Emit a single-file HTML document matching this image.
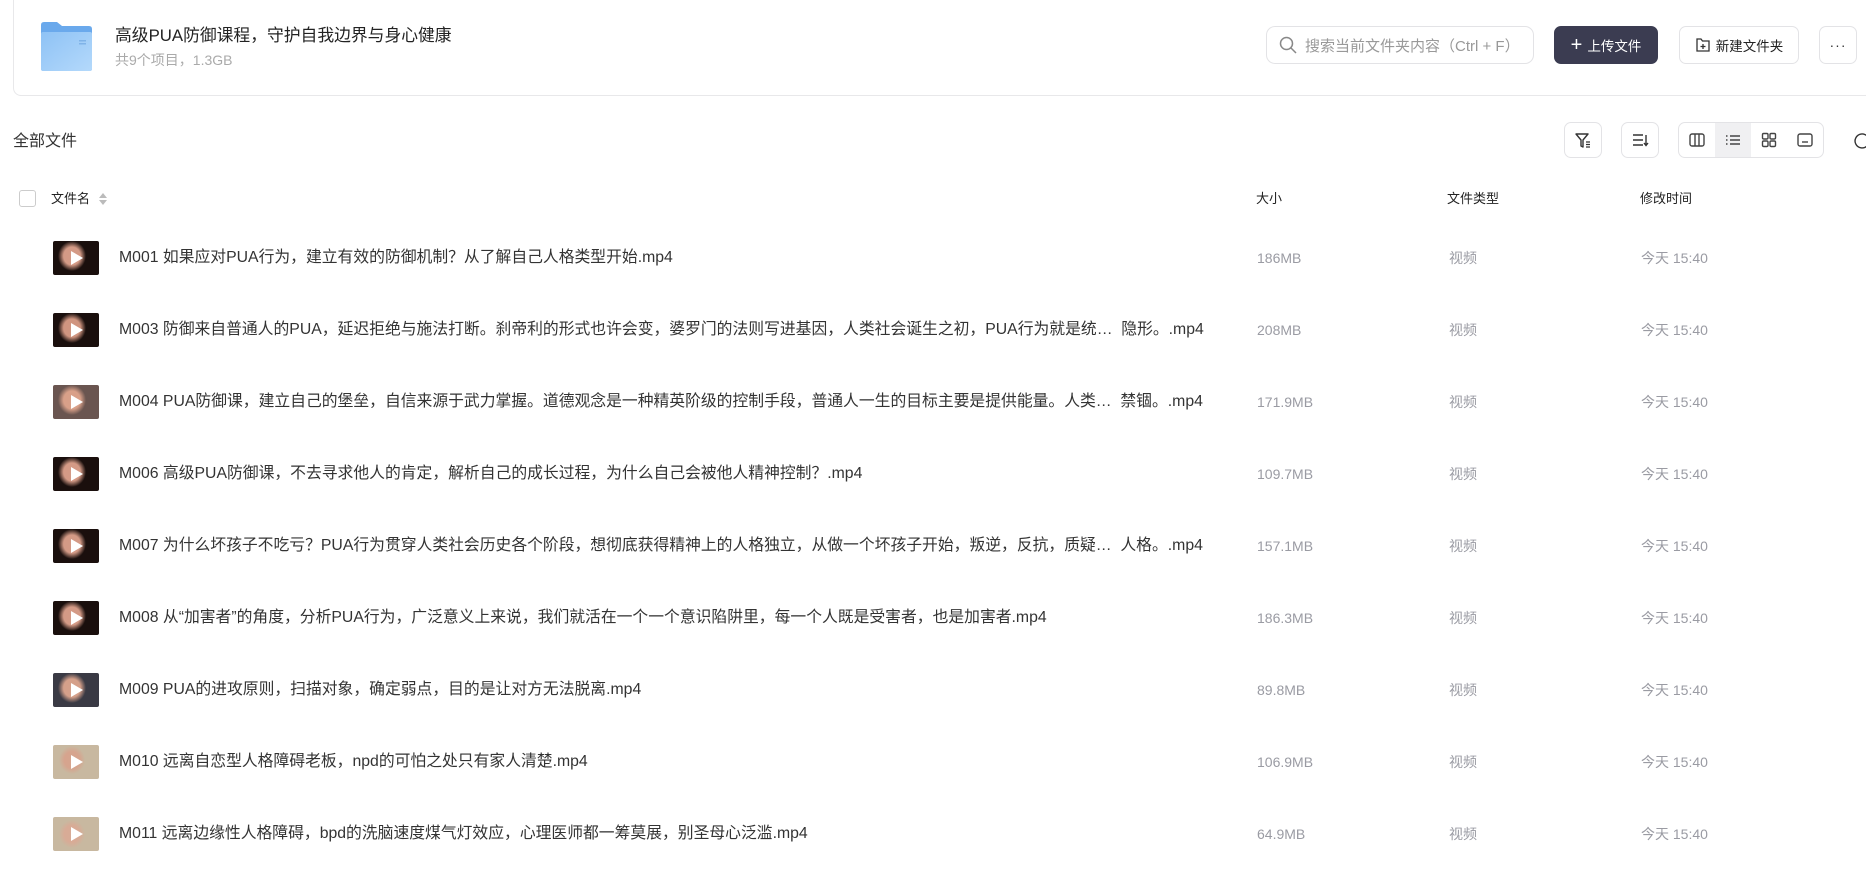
<!DOCTYPE html>
<html><head><meta charset="utf-8">
<style>
*{box-sizing:border-box;margin:0;padding:0}
body{width:1866px;height:869px;overflow:hidden;background:#fff;font-family:"Liberation Sans","Noto Sans CJK SC",sans-serif;color:#333;position:relative}
.abs{position:absolute}
.card{left:13px;top:-10px;width:1860px;height:106px;border:1px solid #e8e8ea;border-radius:8px}
.btn{position:absolute;border:1px solid #e3e3e6;border-radius:7px;background:#fff;display:flex;align-items:center;justify-content:center}
.row{position:absolute;left:0;width:1866px;height:40px}
.thumb{position:absolute;left:53px;top:3px;width:46px;height:34px;border-radius:2px;overflow:hidden}
.thumb .play{position:absolute;left:18px;top:10px;width:0;height:0;border-left:12px solid #fff;border-top:7px solid transparent;border-bottom:7px solid transparent}
.name{position:absolute;left:119px;top:10px;font-size:15.8px;color:#333;white-space:nowrap;line-height:20px}
.sz{position:absolute;left:1257px;top:11px;font-size:14px;color:#9a9ba3;line-height:18px}
.tp{position:absolute;left:1449px;top:11px;font-size:14px;color:#9a9ba3;line-height:18px}
.tm{position:absolute;left:1641px;top:11px;font-size:14px;color:#9a9ba3;line-height:18px}
.h{position:absolute;top:190px;font-size:13px;color:#222;line-height:18px}
</style></head><body>
<div class="abs card"></div>
<svg class="abs" style="left:40px;top:21px" width="53" height="51" viewBox="0 0 53 51">
<path d="M1 4 Q1 1 4 1 H17 L22 5 H49 Q52 5 52 8 V48 Q52 50 49 50 H4 Q1 50 1 47Z" fill="#6aa9ec"/>
<rect x="1" y="11" width="51" height="39" rx="2" fill="url(#g)"/>
<defs><linearGradient id="g" x1="0" y1="0" x2="1" y2="1"><stop offset="0" stop-color="#8ec2f5"/><stop offset="1" stop-color="#b4d9fb"/></linearGradient></defs>
<rect x="39" y="19" width="7" height="1.5" fill="#7fb3e8"/><rect x="39" y="22" width="7" height="1.5" fill="#7fb3e8"/>
</svg>
<div class="abs" style="left:115px;top:24px;font-size:16.8px;color:#222;line-height:24px">高级PUA防御课程，守护自我边界与身心健康</div>
<div class="abs" style="left:115px;top:51px;font-size:14px;color:#aaa;line-height:18px">共9个项目，1.3GB</div>

<div class="btn" style="left:1266px;top:26px;width:268px;height:38px;border-radius:9px;justify-content:flex-start;padding-left:12px">
<svg width="18" height="18" viewBox="0 0 18 18"><circle cx="7.5" cy="7.5" r="6" fill="none" stroke="#888" stroke-width="1.5"/><path d="M12 12l5 5" stroke="#888" stroke-width="1.5"/></svg>
<span style="margin-left:8px;font-size:15px;color:#999">搜索当前文件夹内容（Ctrl + F）</span></div>
<div class="btn" style="left:1554px;top:26px;width:104px;height:38px;background:#3b3c51;border-color:#3b3c51">
<span style="color:#fff;font-size:20px;font-weight:300;margin-right:5px;line-height:20px">+</span><span style="color:#fff;font-size:13.5px">上传文件</span></div>
<div class="btn" style="left:1679px;top:26px;width:120px;height:38px">
<svg width="16" height="16" viewBox="0 0 16 16"><path d="M2 2h4l1.5 2H14v10H2z" fill="none" stroke="#333" stroke-width="1.3"/><path d="M8 7v5M5.5 9.5h5" stroke="#333" stroke-width="1.3"/></svg>
<span style="font-size:13.5px;color:#222;margin-left:5px">新建文件夹</span></div>
<div class="btn" style="left:1819px;top:26px;width:38px;height:38px;font-size:14px;color:#333;letter-spacing:1px">···</div>

<div class="abs" style="left:13px;top:131px;font-size:16px;color:#333;line-height:22px">全部文件</div>

<div class="btn" style="left:1564px;top:122px;width:38px;height:36px">
<svg width="18" height="18" viewBox="0 0 18 18"><path d="M2 3h12l-5 6v7l-2-1V9z" fill="none" stroke="#333" stroke-width="1.4" stroke-linejoin="round"/><path d="M12 11h4M12 13.5h4M12 16h4" stroke="#333" stroke-width="1.2"/></svg></div>
<div class="btn" style="left:1621px;top:122px;width:38px;height:36px">
<svg width="18" height="18" viewBox="0 0 18 18"><path d="M2 4h10M2 9h10M2 14h10M15 4v10M13 12l2 2.5 2-2.5" fill="none" stroke="#333" stroke-width="1.4"/></svg></div>
<div class="btn" style="left:1678px;top:122px;width:146px;height:36px;justify-content:flex-start">
<div style="width:36px;display:flex;justify-content:center"><svg width="18" height="18" viewBox="0 0 18 18"><rect x="2" y="3" width="14" height="12" rx="2" fill="none" stroke="#444" stroke-width="1.4"/><path d="M7 3v12M11 3v12" stroke="#444" stroke-width="1.4"/></svg></div>
<div style="width:36px;height:34px;background:#f0f0f2;display:flex;align-items:center;justify-content:center"><svg width="18" height="18" viewBox="0 0 18 18"><path d="M2 5h1.5M2 9h1.5M2 13h1.5M6 5h10M6 9h10M6 13h10" stroke="#444" stroke-width="1.4"/></svg></div>
<div style="width:36px;display:flex;justify-content:center"><svg width="18" height="18" viewBox="0 0 18 18"><rect x="2.5" y="2.5" width="5.5" height="5.5" rx="1.2" fill="none" stroke="#444" stroke-width="1.4"/><rect x="10" y="2.5" width="5.5" height="5.5" rx="1.2" fill="none" stroke="#444" stroke-width="1.4"/><rect x="2.5" y="10" width="5.5" height="5.5" rx="1.2" fill="none" stroke="#444" stroke-width="1.4"/><rect x="10" y="10" width="5.5" height="5.5" rx="1.2" fill="none" stroke="#444" stroke-width="1.4"/></svg></div>
<div style="width:36px;display:flex;justify-content:center"><svg width="18" height="18" viewBox="0 0 18 18"><rect x="2" y="3" width="14" height="12" rx="2" fill="none" stroke="#444" stroke-width="1.4"/><path d="M6 11h6" stroke="#444" stroke-width="1.4"/></svg></div>
</div>
<svg class="abs" style="left:1853px;top:131px" width="18" height="18" viewBox="0 0 18 18"><path d="M14 5A7 7 0 1 0 16 9" fill="none" stroke="#333" stroke-width="1.4"/></svg>

<div class="abs" style="left:19px;top:190px;width:17px;height:17px;border:1px solid #ccc;border-radius:3px"></div>
<div class="h" style="left:51px">文件名</div>
<svg class="abs" style="left:99px;top:193px" width="8" height="12" viewBox="0 0 8 12"><path d="M4 0L8 5H0z M4 12L0 7H8z" fill="#bbb"/></svg>
<div class="h" style="left:1256px">大小</div>
<div class="h" style="left:1447px">文件类型</div>
<div class="h" style="left:1640px">修改时间</div>

<div class="row" style="top:238px"><div class="thumb" style="background:radial-gradient(ellipse 14px 15px at 19px 15px,#d49a86 60%,#1a0f0d 100%)"><div class="play"></div></div><div class="name">M001 如果应对PUA行为，建立有效的防御机制？从了解自己人格类型开始.mp4</div><div class="sz">186MB</div><div class="tp">视频</div><div class="tm">今天 15:40</div></div>
<div class="row" style="top:310px"><div class="thumb" style="background:radial-gradient(ellipse 14px 15px at 19px 15px,#d09580 60%,#1a0f0d 100%)"><div class="play"></div></div><div class="name">M003 防御来自普通人的PUA，延迟拒绝与施法打断。刹帝利的形式也许会变，婆罗门的法则写进基因，人类社会诞生之初，PUA行为就是统…&nbsp; 隐形。.mp4</div><div class="sz">208MB</div><div class="tp">视频</div><div class="tm">今天 15:40</div></div>
<div class="row" style="top:382px"><div class="thumb" style="background:radial-gradient(ellipse 14px 15px at 19px 15px,#d9a089 60%,#6a5550 100%)"><div class="play"></div></div><div class="name">M004 PUA防御课，建立自己的堡垒，自信来源于武力掌握。道德观念是一种精英阶级的控制手段，普通人一生的目标主要是提供能量。人类…&nbsp; 禁锢。.mp4</div><div class="sz">171.9MB</div><div class="tp">视频</div><div class="tm">今天 15:40</div></div>
<div class="row" style="top:454px"><div class="thumb" style="background:radial-gradient(ellipse 14px 15px at 19px 15px,#d49a86 60%,#1a0f0d 100%)"><div class="play"></div></div><div class="name">M006 高级PUA防御课，不去寻求他人的肯定，解析自己的成长过程，为什么自己会被他人精神控制？.mp4</div><div class="sz">109.7MB</div><div class="tp">视频</div><div class="tm">今天 15:40</div></div>
<div class="row" style="top:526px"><div class="thumb" style="background:radial-gradient(ellipse 14px 15px at 19px 15px,#d49a86 60%,#1a0f0d 100%)"><div class="play"></div></div><div class="name">M007 为什么坏孩子不吃亏？PUA行为贯穿人类社会历史各个阶段，想彻底获得精神上的人格独立，从做一个坏孩子开始，叛逆，反抗，质疑…&nbsp; 人格。.mp4</div><div class="sz">157.1MB</div><div class="tp">视频</div><div class="tm">今天 15:40</div></div>
<div class="row" style="top:598px"><div class="thumb" style="background:radial-gradient(ellipse 14px 15px at 19px 15px,#d49a86 60%,#1a0f0d 100%)"><div class="play"></div></div><div class="name">M008 从“加害者”的角度，分析PUA行为，广泛意义上来说，我们就活在一个一个意识陷阱里，每一个人既是受害者，也是加害者.mp4</div><div class="sz">186.3MB</div><div class="tp">视频</div><div class="tm">今天 15:40</div></div>
<div class="row" style="top:670px"><div class="thumb" style="background:radial-gradient(ellipse 14px 15px at 19px 15px,#d5a08a 60%,#3a3a44 100%)"><div class="play"></div></div><div class="name">M009 PUA的进攻原则，扫描对象，确定弱点，目的是让对方无法脱离.mp4</div><div class="sz">89.8MB</div><div class="tp">视频</div><div class="tm">今天 15:40</div></div>
<div class="row" style="top:742px"><div class="thumb" style="background:radial-gradient(ellipse 13px 14px at 19px 15px,#d6a48e 60%,#c8b8a0 100%)"><div class="play"></div></div><div class="name">M010 远离自恋型人格障碍老板，npd的可怕之处只有家人清楚.mp4</div><div class="sz">106.9MB</div><div class="tp">视频</div><div class="tm">今天 15:40</div></div>
<div class="row" style="top:814px"><div class="thumb" style="background:radial-gradient(ellipse 13px 14px at 19px 17px,#d8ab96 60%,#c8b8a0 100%)"><div class="play"></div></div><div class="name">M011 远离边缘性人格障碍，bpd的洗脑速度煤气灯效应，心理医师都一筹莫展，别圣母心泛滥.mp4</div><div class="sz">64.9MB</div><div class="tp">视频</div><div class="tm">今天 15:40</div></div>
</body></html>
